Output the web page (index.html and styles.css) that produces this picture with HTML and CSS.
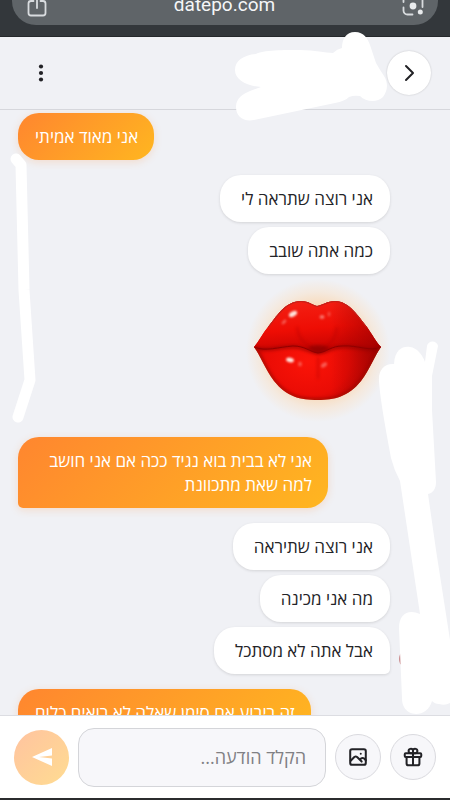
FILE: index.html
```
<!DOCTYPE html>
<html lang="he" dir="rtl">

<head>
    <meta charset="UTF-8">
    <meta name="viewport" content="width=device-width, initial-scale=1.0">
    <title>datepo.com</title>
    <link rel="stylesheet" href="styles.css">
</head>

<body>
    <div class="browser-bar">
        <div class="address" dir="ltr">
            <svg class="share-icon" width="20" height="24" viewBox="0 0 20 24" fill="none" stroke="#d9dcdf" stroke-width="1.8" stroke-linecap="round" stroke-linejoin="round">
                <path d="M6.500 8H4a2.500 2.500 0 0 0-2.500 2.500V20A2.500 2.500 0 0 0 4 22.500h12a2.500 2.500 0 0 0 2.500-2.500v-9.500A2.500 2.500 0 0 0 16 8h-2.500M10 15V1.500M6 5l4-4 4 4" />
            </svg>
            <span class="url">datepo.com</span>
            <svg class="lens-icon" width="22" height="24" viewBox="0 0 22 24" fill="none" stroke="#d9dcdf" stroke-width="1.8" stroke-linecap="round">
                <path d="M1.500 9V6a4 4 0 0 1 4-4h1M15.500 2h1a4 4 0 0 1 4 4v8M1.500 14.500v3a4 4 0 0 0 4 4h5" />
                <circle cx="11" cy="13" r="3.400" fill="#e8eaec" stroke="none" />
                <circle cx="18.300" cy="19" r="2.500" fill="#e8eaec" stroke="none" />
            </svg>
        </div>
    </div>

    <header class="chat-header">
        <button class="back-button" type="button" aria-label="חזרה">
            <svg width="24" height="24" viewBox="0 0 24 24" fill="none" stroke="#222226" stroke-width="2" stroke-linecap="round" stroke-linejoin="round">
                <path d="M9 5l7 7-7 7" />
            </svg>
        </button>
        <button class="menu-button" type="button" aria-label="תפריט">
            <svg width="24" height="24" viewBox="0 0 24 24" fill="#222226">
                <circle cx="12" cy="5.500" r="2.100" />
                <circle cx="12" cy="12" r="2.100" />
                <circle cx="12" cy="18.500" r="2.100" />
            </svg>
        </button>
    </header>

    <main class="messages">
        <div class="group sent">
            <p class="bubble">אני מאוד אמיתי</p>
        </div>
        <div class="group received">
            <p class="bubble">אני רוצה שתראה לי</p>
            <p class="bubble">כמה אתה שובב</p>
            <div class="gift">
                <svg class="lips" width="128" height="102" viewBox="0 0 128 102">
                    <defs>
                        <linearGradient id="upper" x1="0" y1="0" x2="0.200" y2="1">
                            <stop offset="0" stop-color="#f52316" />
                            <stop offset="0.600" stop-color="#ee0d04" />
                            <stop offset="1" stop-color="#c80402" />
                        </linearGradient>
                        <radialGradient id="lower" cx="0.420" cy="0.600" r="0.550">
                            <stop offset="0" stop-color="#fb1408" />
                            <stop offset="0.600" stop-color="#ea0c05" />
                            <stop offset="1" stop-color="#b80603" />
                        </radialGradient>
                        <linearGradient id="side" x1="0" x2="1">
                            <stop offset="0.600" stop-color="#8e0000" stop-opacity="0" />
                            <stop offset="1" stop-color="#8e0000" stop-opacity="0.600" />
                        </linearGradient>
                        <filter id="soft" x="-50%" y="-50%" width="200%" height="200%">
                            <feGaussianBlur stdDeviation="1.500" />
                        </filter>
                        <filter id="shine" x="-50%" y="-50%" width="200%" height="200%">
                            <feGaussianBlur stdDeviation="0.800" />
                        </filter>
                        <clipPath id="outline">
                            <path d="M0 47C5 41 9 33 14 27C22 17 31 1 47 1C55 1 58 5 63 6C69 5 73 1 81 1C95 1 105 17 113 27C118 34 122 42 127 47C120 57 116 69 107 81C94 97 80 100 64 100C46 100 33 97 20 81C11 69 7 57 0 47Z" />
                        </clipPath>
                    </defs>
                    <g clip-path="url(#outline)">
                        <rect width="128" height="102" fill="url(#lower)" />
                        <path d="M0 0H128V47C119 51 104 45 89 46C77 46 73 52 64 53C56 52 51 46 39 46C24 46 12 52 0 48Z" fill="url(#upper)" />
                        <path d="M2 48C12 52 24 47 39 47C51 47 56 53 64 53C73 53 77 47 89 47C104 46 116 52 126 48" fill="none" stroke="#850000" stroke-width="3" opacity="0.600" filter="url(#soft)" />
                        <path d="M53 47Q63 43 76 47Q70 52 64 53Q58 51 53 47Z" fill="#7c0000" opacity="0.600" filter="url(#soft)" />
                        <path d="M0 47C12 52 24 47 39 46C51 46 56 52 64 53C73 52 77 46 89 46C104 45 116 52 127 47" fill="none" stroke="#8f0000" stroke-width="1" />
                        <path d="M43 27Q45 42 56 46M83 27Q81 42 72 46M64 57V79" fill="none" stroke="#b10000" stroke-width="2" opacity="0.400" filter="url(#soft)" />
                        <rect width="128" height="102" fill="url(#side)" />
                        <path d="M0 47C7 57 11 69 20 81C33 97 46 100 64 100C80 100 94 97 107 81C116 69 120 57 127 47" fill="none" stroke="#9b0804" stroke-width="4" opacity="0.700" filter="url(#soft)" />
                        <path d="M14 27C22 17 31 1 47 1C55 1 58 5 63 6C69 5 73 1 81 1C95 1 105 17 113 27" fill="none" stroke="#c4201a" stroke-width="2" />
                    </g>
                    <g fill="#ffe3dc" filter="url(#shine)">
                        <ellipse cx="39" cy="14" rx="4.500" ry="2.500" transform="rotate(-30 39 14)" />
                        <ellipse cx="30" cy="22" rx="3" ry="1.500" transform="rotate(-45 30 22)" opacity="0.350" />
                        <ellipse cx="68" cy="17" rx="2.500" ry="2" opacity="0.450" />
                        <ellipse cx="75" cy="14" rx="1.500" ry="2.500" opacity="0.250" />
                        <ellipse cx="36" cy="60" rx="4" ry="2.200" transform="rotate(12 36 60)" />
                        <ellipse cx="46" cy="64" rx="2" ry="2.500" opacity="0.300" />
                        <ellipse cx="70" cy="65" rx="3.500" ry="2" transform="rotate(-35 70 65)" opacity="0.350" />
                    </g>
                </svg>
            </div>
        </div>
        <div class="group sent">
            <p class="bubble tail">אני לא בבית בוא נגיד ככה אם אני חושב למה שאת מתכוונת</p>
        </div>
        <div class="group received">
            <p class="bubble">אני רוצה שתיראה</p>
            <p class="bubble">מה אני מכינה</p>
            <p class="bubble tail">אבל אתה לא מסתכל</p>
        </div>
        <div class="group sent">
            <p class="bubble">זה ריבוע אם סימן שאלה לא רואים כלום</p>
        </div>
    </main>

    <form class="composer">
        <button class="round-button" type="button" aria-label="מתנה">
            <svg width="22" height="22" viewBox="0 0 24 24" fill="none" stroke="#222226" stroke-width="2.200" stroke-linejoin="round">
                <rect x="3" y="8" width="18" height="4" rx="1" />
                <path d="M5 12v7a2 2 0 0 0 2 2h10a2 2 0 0 0 2-2v-7M12 8v13" />
                <path d="M12 8H9.800a2.500 2.500 0 1 1 2.200-3.500ZM12 8h2.200A2.500 2.500 0 1 0 12 4.500Z" />
            </svg>
        </button>
        <button class="round-button" type="button" aria-label="תמונה">
            <svg width="22" height="22" viewBox="0 0 24 24" fill="none" stroke="#222226" stroke-width="2.200" stroke-linecap="round" stroke-linejoin="round">
                <rect x="3.500" y="3.500" width="17" height="17" rx="2" />
                <path d="M4 16l4-4q1.500-1 3 0l5 5M14 15l1.500-1.500q1.500-1 3 0l2 2" />
                <path d="M15 8.500v0" />
            </svg>
        </button>
        <input class="message-input" type="text" placeholder="הקלד הודעה..." aria-label="הקלד הודעה">
        <button class="send-button" type="submit" aria-label="שליחה">
            <svg width="22" height="20" viewBox="0 0 22 20" fill="#fff">
                <path d="M1 10L21 1V8.500L8 10L21 11.500V19Z" />
            </svg>
        </button>
    </form>
    <div class="bottom-edge"></div>

    <svg class="scribbles" viewBox="0 0 450 800" preserveAspectRatio="none" fill="#fff" stroke="#fff" stroke-linecap="round" stroke-linejoin="round" aria-hidden="true">
        <ellipse cx="402" cy="659" rx="3" ry="6" fill="#c98a8c" stroke="none" />
        <path stroke="none" d="M256 54C262 50 285 50 300 50C315 50 325 53 333 53Q337 49 342 48C342 39 346 32 355 32C364 32 368 39 370 45L376 63Q380 70 384 76C389 84 387 92 383 97C377 103 366 102 360 96Q354 95 349 97Q345 101 335 103L254 120C243 122 236 116 236 107C236 98 243 94 250 91L261 87C247 86 235 80 235 70C235 61 243 55 256 54Z" />
        <path fill="none" stroke-width="11" d="M16 159L21 165L24 290L30 380L18 417" />
        <path stroke="none" d="M379 381C378 370 385 363 394 364C395 349 403 346 410 347C417 348 422 354 425 362L427 346C428 340 437 340 438 346L432 376V410L436 482C436 489 433 493 428 494L436 550L450 640V703Q445 706 439 704C436 704 434 703 432 701C428 716 410 718 404 707Q402 704 402 698L399 628C399 613 409 609 420 614L400 481Q394 470 391 458Q380 400 379 381Z" />
    </svg>
</body>

</html>
```
FILE: styles.css
```
* {
    box-sizing: border-box;
}

body {
    margin: 0;
    height: 100vh;
    display: flex;
    flex-direction: column;
    position: relative;
    overflow: hidden;
    background: #f0f1f5;
    color: #242428;
    font-family: "Open Sans", "Noto Sans", sans-serif;
    font-size: 17px;
    line-height: 24px;
}

button {
    display: flex;
    justify-content: center;
    align-items: center;
    padding: 0;
    border: none;
    background: none;
    cursor: pointer;
}

/* Browser toolbar */
.browser-bar {
    flex: none;
    height: 37px;
    padding: 0 12px 12px;
    background: #33373b;
    border-bottom: 1px solid #25282b;
}

.address {
    height: 25px;
    padding: 0 14px 8px 15px;
    display: flex;
    justify-content: space-between;
    align-items: flex-end;
    background: #5f6468;
    border-radius: 0 0 24px 24px;
    color: #f5f6f7;
}

.address svg {
    flex: none;
}

.url {
    font-family: Roboto, "Liberation Sans", sans-serif;
    font-size: 19px;
}

/* Chat header */
.chat-header {
    flex: none;
    height: 73px;
    padding: 0 19px;
    display: flex;
    justify-content: space-between;
    align-items: center;
    border-bottom: 1px solid #d6d7dc;
}

.back-button,
.menu-button {
    width: 44px;
    height: 44px;
    border-radius: 50%;
}

.back-button {
    background: #fff;
    box-shadow: 0 0 2px rgba(0, 0, 0, 0.2);
}

/* Messages */
.messages {
    flex: 1;
    min-height: 0;
    overflow: hidden;
    padding: 3px 60px 0 18px;
    display: flex;
    flex-direction: column;
    gap: 15px;
}

.group {
    flex: none;
    display: flex;
    flex-direction: column;
    gap: 5px;
}

.sent {
    align-items: flex-end;
}

.received {
    align-items: flex-start;
}

.bubble {
    margin: 0;
    max-width: 310px;
    padding: 12px 16px 11px;
    border-radius: 21px;
}

.sent .bubble {
    padding-left: 17px;
    background: linear-gradient(135deg, #ff862f, #ffb620);
    color: #fff;
    box-shadow: 0 2px 8px rgba(255, 134, 47, 0.2);
}

.sent .tail {
    border-bottom-left-radius: 5px;
}

.received .bubble {
    padding-right: 17px;
    padding-left: 21px;
    background: #fff;
    box-shadow: 0 1px 3px rgba(0, 0, 0, 0.12);
}

.received .tail {
    border-bottom-right-radius: 5px;
}

.gift {
    padding: 21px 8px 20px;
    background: radial-gradient(closest-side, rgba(255, 200, 140, 0.6) 60%, rgba(255, 215, 170, 0.3) 82%, rgba(255, 225, 190, 0));
}

.lips {
    display: block;
}

/* Composer */
.composer {
    flex: none;
    height: 83px;
    padding: 0 14px;
    display: flex;
    align-items: center;
    gap: 9px;
    background: #fff;
    border-top: 1px solid #dcdde2;
}

.round-button {
    flex: none;
    width: 46px;
    height: 46px;
    background: #f7f7fa;
    border: 1px solid #dadadf;
    border-radius: 50%;
}

.message-input {
    flex: 1;
    min-width: 0;
    height: 59px;
    padding: 0 19px;
    background: #f7f7fa;
    border: 1px solid #d4d5d9;
    border-radius: 16px;
    color: #242428;
    font: inherit;
    font-size: 18px;
}

.message-input::placeholder {
    color: #808084;
    opacity: 1;
}

.send-button {
    flex: none;
    width: 55px;
    height: 55px;
    background: linear-gradient(135deg, #ffc3a0, #ffdc91);
    border-radius: 50%;
}

.bottom-edge {
    flex: none;
    height: 2px;
    background: #2b2c2e;
}

/* Freehand strokes over the page */
.scribbles {
    position: absolute;
    inset: 0;
    width: 100%;
    height: 100%;
    pointer-events: none;
}
```
